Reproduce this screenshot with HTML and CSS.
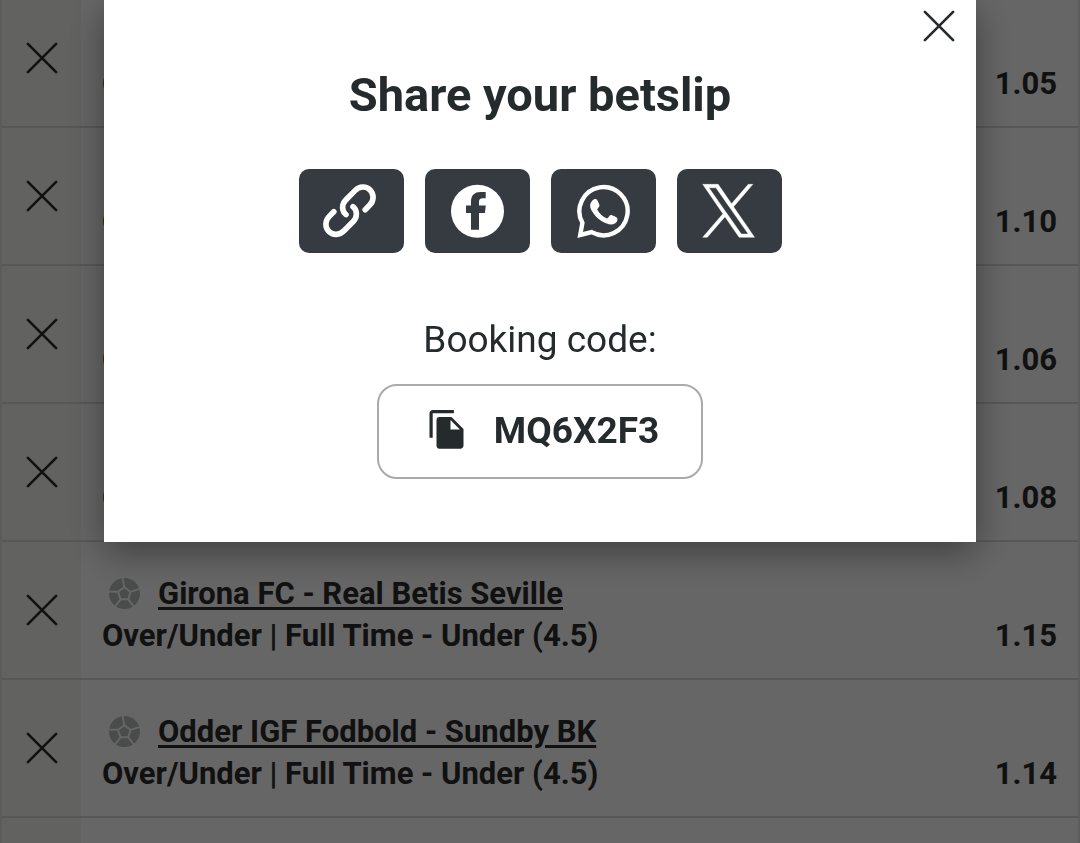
FILE: index.html
```html
<!DOCTYPE html>
<html lang="en">
<head>
    <meta charset="UTF-8">
    <meta name="viewport" content="width=device-width, initial-scale=1.0">
    <title>Share your betslip</title>
    <link rel="stylesheet" href="styles.css">
</head>
<body>
    <svg class="sprite" aria-hidden="true">
        <symbol id="cross" viewBox="0 0 34 34">
            <path d="M2 2L32 32M32 2L2 32" fill="none" stroke="currentColor" stroke-width="2.8" stroke-linecap="round"/>
        </symbol>
        <symbol id="ball" viewBox="0 0 32 32">
            <circle cx="16.5" cy="15.5" r="15.5" fill="#b8bfbd"/>
            <path d="M16.3 9.3L22.6 13.8L20.2 21.3H12.5L10 13.8ZM16.3 9.3L14.5 0M22.6 13.8L32 10.8M20.2 21.3L26 28.5M12.5 21.3L7 28.5M10 13.8L0 13.6" fill="none" stroke="#fff" stroke-width="1.9"/>
        </symbol>
    </svg>

    <ul class="betslip">
        <li class="bet">
            <button class="remove" aria-label="Remove"><svg class="cross"><use href="#cross"/></svg></button>
            <div class="info">
                <p class="market"><span>Over/Under</span><span class="odds">1.05</span></p>
            </div>
        </li>
        <li class="bet">
            <button class="remove" aria-label="Remove"><svg class="cross"><use href="#cross"/></svg></button>
            <div class="info">
                <p class="market"><span>Over/Under</span><span class="odds">1.10</span></p>
            </div>
        </li>
        <li class="bet">
            <button class="remove" aria-label="Remove"><svg class="cross"><use href="#cross"/></svg></button>
            <div class="info">
                <p class="market"><span>Over/Under</span><span class="odds">1.06</span></p>
            </div>
        </li>
        <li class="bet">
            <button class="remove" aria-label="Remove"><svg class="cross"><use href="#cross"/></svg></button>
            <div class="info">
                <p class="market"><span>Over/Under</span><span class="odds">1.08</span></p>
            </div>
        </li>
        <li class="bet">
            <button class="remove" aria-label="Remove"><svg class="cross"><use href="#cross"/></svg></button>
            <div class="info">
                <p class="match"><svg class="ball"><use href="#ball"/></svg><a href="#">Girona FC - Real Betis Seville</a></p>
                <p class="market"><span>Over/Under | Full Time - Under (4.5)</span><span class="odds">1.15</span></p>
            </div>
        </li>
        <li class="bet">
            <button class="remove" aria-label="Remove"><svg class="cross"><use href="#cross"/></svg></button>
            <div class="info">
                <p class="match"><svg class="ball"><use href="#ball"/></svg><a href="#">Odder IGF Fodbold - Sundby BK</a></p>
                <p class="market"><span>Over/Under | Full Time - Under (4.5)</span><span class="odds">1.14</span></p>
            </div>
        </li>
        <li class="bet">
            <div class="remove"></div>
            <div class="info"></div>
        </li>
    </ul>

    <div class="overlay">
        <div class="modal" role="dialog" aria-labelledby="title">
            <button class="close" aria-label="Close"><svg class="cross"><use href="#cross"/></svg></button>
            <h1 id="title">Share your betslip</h1>
            <div class="share">
                <button aria-label="Copy link">
                    <svg viewBox="2 0.8 53 53" fill="none" stroke="#fff" stroke-width="5.6" stroke-linecap="round">
                        <path d="M23 30.4C18.6 27 18.6 20 22.5 16L32 6.4C36.5 1.9 43 1.6 47.1 5.7C51.2 9.8 51 16.5 47 20.6L42.2 25.5"/>
                        <path d="M23 30.4C18.6 27 18.6 20 22.5 16L32 6.4C36.5 1.9 43 1.6 47.1 5.7C51.2 9.8 51 16.5 47 20.6L42.2 25.5" transform="rotate(180 26.5 26.5)"/>
                    </svg>
                </button>
                <button aria-label="Facebook">
                    <svg viewBox="0 0.3 53 53">
                        <circle cx="26.5" cy="26.5" r="26.5" fill="#fff"/>
                        <path d="M20 45V28.3H15V20.7H20V17C20 10.5 23.5 7.2 29.5 7.2H34.7V13.5H31.5C29 13.5 28 14.7 28 17V20.7H34.8L33.9 28.3H28V45Z" fill="#363b41"/>
                    </svg>
                </button>
                <button aria-label="WhatsApp">
                    <svg viewBox="-0.2 -0.2 53 53">
                        <path d="M5.2 37.6A24.1 24.1 0 1 1 14.5 47L3 49.8Z" fill="none" stroke="#fff" stroke-width="4.4"/>
                        <path d="M16.5 14.2C17.3 13.6 19 13.5 19.8 14.5C21 16.5 22 18.6 22.3 20.2C22.5 21.6 20.5 23 20 24.2C22 28.4 25.5 31.5 29.8 33.2C31.2 32.6 32.2 30.2 33.4 29.8C34.5 29.6 38.8 31.8 39.9 32.6C40.7 34.9 39.7 37 38 38C35.5 39.6 32.6 39.5 29.5 38.3C22.5 35.6 17.6 31.2 14 24.5C12 20.8 12.8 16.8 16.5 14.2Z" fill="#fff"/>
                    </svg>
                </button>
                <button aria-label="X">
                    <svg viewBox="20 15 1200 1227">
                        <path d="M714.163 519.284L1160.89 0H1055.03L667.137 450.887L357.328 0H0L468.492 681.821L0 1226.37H105.866L515.491 750.218L842.672 1226.37H1200L714.137 519.284ZM569.165 687.828L521.697 619.934L144.011 79.694H306.615L611.412 515.685L658.88 583.579L1055.08 1150.3H892.476Z" fill="#fff" stroke="#fff" stroke-width="10"/>
                    </svg>
                </button>
            </div>
            <p class="label">Booking code:</p>
            <button class="code">
                <svg viewBox="-0.5 1.5 34 40" fill="#252b2d">
                    <path d="M3.4 0.6H24.4V3.8H3.2V28.2H0V4C0 2 1.4 0.6 3.4 0.6Z"/>
                    <path d="M10 7.6H22L34 19.6V36C34 38 32.8 39.2 30.8 39.2H10C8 39.2 7 38 7 36V10.8C7 8.8 8 7.6 10 7.6ZM21 10.6V20H30.4Z"/>
                </svg>
                MQ6X2F3
            </button>
        </div>
    </div>
</body>
</html>
```
FILE: styles.css
```css
* {
    box-sizing: border-box;
}

body {
    margin: 0;
    height: 100vh;
    overflow: hidden;
    background-color: #fff;
    color: #252b2d;
    font-family: Roboto, Arial, sans-serif;
}

button {
    border: none;
    padding: 0;
    background: none;
    color: inherit;
    font-family: inherit;
    cursor: pointer;
}

p {
    margin: 0;
}

.sprite {
    display: none;
}

.cross {
    display: block;
    width: 32px;
    height: 32px;
}

/* bet list, scrolled a little under the top edge */
.betslip {
    list-style: none;
    margin: -10px 0 0;
    padding: 0;
    border: 2px solid #e6e6e6;
    border-top: none;
    color: #2b2b2b;
}

.bet {
    display: flex;
    height: 138px;
    border-bottom: 2px solid #dadada;
}

.bet:last-child {
    height: auto;
    min-height: 25px;
    border-bottom: none;
}

.remove {
    display: flex;
    justify-content: center;
    align-items: center;
    width: 79px;
    background-color: #f5f4ef;
}

.info {
    flex: 1;
    display: flex;
    flex-direction: column;
    justify-content: flex-end;
    padding: 0 21px;
    font-size: 31px;
    font-weight: 700;
    line-height: 42px;
}

.bet .market {
    margin-bottom: 21px;
}

.match {
    display: flex;
    align-items: center;
    gap: 18px;
    padding-left: 6px;
}

.match a {
    color: inherit;
    text-underline-offset: 3px;
    text-decoration-thickness: 3px;
}

.ball {
    width: 32px;
    height: 32px;
}

.market {
    display: flex;
    justify-content: space-between;
}

.overlay {
    position: fixed;
    inset: 0;
    padding: 0 104px;
    background-color: rgba(0, 0, 0, 0.6);
}

.modal {
    position: relative;
    display: flex;
    flex-direction: column;
    align-items: center;
    padding: 64px 0 63px;
    background-color: #fff;
    box-shadow: 0 10px 36px rgba(0, 0, 0, 0.4);
}

.close {
    position: absolute;
    top: 10px;
    right: 21px;
}

h1 {
    margin: 0 0 43px;
    font-size: 47px;
    line-height: 62px;
}

.share {
    display: flex;
    gap: 21px;
    margin-bottom: 63px;
}

.share button {
    display: flex;
    justify-content: center;
    align-items: center;
    width: 105px;
    height: 84px;
    border-radius: 10px;
    background-color: #363b41;
}

.share svg {
    width: 53px;
    height: 53px;
    overflow: visible;
}

.label {
    margin-bottom: 20px;
    font-size: 37px;
    line-height: 48px;
}

.code {
    display: flex;
    align-items: center;
    gap: 31px;
    padding: 21px 42px 23px 50px;
    border: 2px solid #aaa;
    border-radius: 20px;
    font-size: 37px;
    font-weight: 700;
    line-height: 47px;
}

.code svg {
    width: 34px;
    height: 40px;
    overflow: visible;
}
```
